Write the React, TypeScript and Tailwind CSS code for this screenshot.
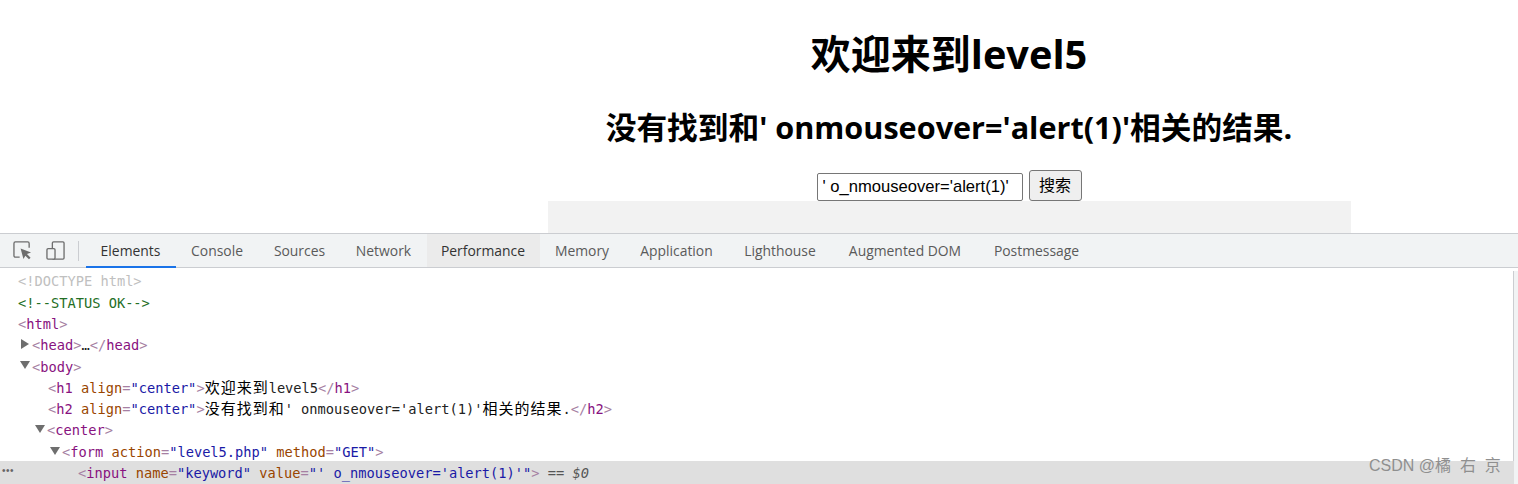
import React from "react";

const mono = "font-['DejaVu_Sans_Mono','Noto_Sans_CJK_SC',monospace]";

const tabs = [
  { name: "Elements", w: "w-[90px]", active: true },
  { name: "Console", w: "w-[83px]" },
  { name: "Sources", w: "w-[82px]" },
  { name: "Network", w: "w-[86px]" },
  { name: "Performance", w: "w-[113px]", hover: true },
  { name: "Memory", w: "w-[85px]" },
  { name: "Application", w: "w-[104px]" },
  { name: "Lighthouse", w: "w-[103px]" },
  { name: "Augmented DOM", w: "w-[147px]" },
  { name: "Postmessage", w: "w-[116px]" },
];

const Tag = ({ children }: { children: React.ReactNode }) => (
  <span className="text-[#881280]">{children}</span>
);
const Gray = ({ children }: { children: React.ReactNode }) => (
  <span className="text-[#a67fa3]">{children}</span>
);
const Attr = ({ children }: { children: React.ReactNode }) => (
  <span className="text-[#994500]">{children}</span>
);
const Val = ({ children }: { children: React.ReactNode }) => (
  <span className="text-[#1a1aa6]">{children}</span>
);
const Cjk = ({ children }: { children: React.ReactNode }) => (
  <span className="text-[15px] tracking-[1px] text-black">{children}</span>
);

const Arrow = ({ open }: { open?: boolean }) =>
  open ? (
    <span className="w-0 h-0 border-x-[5px] border-x-transparent border-t-[8px] border-t-[#6e6e6e] mr-[2px] -mt-[3px]" />
  ) : (
    <span className="w-0 h-0 border-y-[5px] border-y-transparent border-l-[8px] border-l-[#6e6e6e] mr-[3px] -mt-[3px]" />
  );

const Row = ({ pad, arrow, children }: { pad: string; arrow?: "open" | "closed"; children: React.ReactNode }) => (
  <div className={`h-[21.3px] flex items-center whitespace-pre ${pad}`}>
    {arrow && <Arrow open={arrow === "open"} />}
    <span>{children}</span>
  </div>
);

export default function App() {
  return (
    <div className="w-[1518px] h-[484px] overflow-hidden bg-white flex flex-col font-['Liberation_Sans','Noto_Sans_CJK_SC',sans-serif] relative">
      {/* page */}
      <div className="h-[233px] flex flex-col items-center shrink-0 text-black">
        <h1 className="mt-[28px] ml-[380px] h-[52px] leading-[52px] font-bold whitespace-pre">
          <span className="text-[40px]">欢迎来到</span>
          <span className="text-[39.7px] font-['Open_Sans',sans-serif]">level5</span>
        </h1>
        <h2 className="mt-[27px] ml-[380px] h-[40px] leading-[40px] font-bold whitespace-pre">
          <span className="text-[30.7px]">没有找到和</span>
          <span className="text-[30.6px] font-['Open_Sans',sans-serif]">' onmouseover='alert(1)'</span>
          <span className="text-[30.7px]">相关的结果</span>
          <span className="text-[30.6px] font-['Open_Sans',sans-serif]">.</span>
        </h2>
        <div className="mt-[23px] ml-[380px] flex items-end gap-[6px]">
          <input
            readOnly
            value="' o_nmouseover='alert(1)'"
            className="w-[206px] h-[28px] border border-[#767676] rounded-[2px] px-[5px] text-[16.6px] text-black bg-white"
          />
          <button className="w-[53px] h-[31px] border border-[#767676] rounded-[3px] bg-[#efefef] text-[16px] text-black">
            搜索
          </button>
        </div>
        <div className="w-[803px] ml-[380px] h-[32px] bg-[#f2f2f2] shrink-0" />
      </div>

      {/* devtools tab bar */}
      <div className="h-[35px] shrink-0 bg-[#f1f3f4] border-y border-[#cbcdd1] flex items-stretch">
        <div className="w-[86px] flex items-center shrink-0 pl-[13px]">
          <svg width="19" height="19" viewBox="0 0 20 20" fill="none" className="text-[#6e6e6e]">
            <path d="M7 17H2.500A1.500 1.500 0 0 1 1 15.500V2.500A1.500 1.500 0 0 1 2.500 1H15.500A1.500 1.500 0 0 1 17 2.500V7" stroke="currentColor" strokeWidth="1.400" />
            <path d="M8 8l11 4.200-4.300 1.600 3.800 3.700-1.700 1.700-3.800-3.800L11 19z" fill="currentColor" />
          </svg>
          <svg width="19" height="19" viewBox="0 0 20 20" fill="none" className="ml-[14px] text-[#6e6e6e]">
            <rect x="6.700" y="1" width="12.300" height="18" rx="1.200" stroke="currentColor" strokeWidth="1.400" />
            <rect x="1" y="8" width="8.500" height="11" rx="1.200" fill="#f1f3f4" stroke="currentColor" strokeWidth="1.400" />
          </svg>
          <div className="ml-[13px] w-px h-[20px] bg-[#cbcdd1]" />
        </div>
        {tabs.map((t) => (
          <div
            key={t.name}
            className={`${t.w} shrink-0 flex items-center justify-center pt-[1px] pr-[1px] text-[13.9px] font-['Open_Sans',sans-serif] relative ${
              t.active || t.hover ? "text-[#333]" : "text-[#5a5a5a]"
            } ${t.hover ? "bg-[#ebebeb]" : ""}`}
          >
            {t.name}
            {t.active && <span className="absolute left-0 right-0 -bottom-px h-[2px] bg-[#1a73e8]" />}
          </div>
        ))}
      </div>

      {/* elements tree */}
      <div className={`flex-1 pt-[3px] text-[13.7px] ${mono} text-[#222] flex`}>
        <div className="w-[1514px] shrink-0 border-r border-[#cbcdd1]">
          <Row pad="pl-[18px]"><span className="text-[#c0c0c0]">{"<!DOCTYPE html>"}</span></Row>
          <Row pad="pl-[18px]"><span className="text-[#236e25]">{"<!--STATUS OK-->"}</span></Row>
          <Row pad="pl-[18px]"><Gray>{"<"}</Gray><Tag>html</Tag><Gray>{">"}</Gray></Row>
          <Row pad="pl-[21px]" arrow="closed"><Gray>{"<"}</Gray><Tag>head</Tag><Gray>{">"}</Gray>…<Gray>{"</"}</Gray><Tag>head</Tag><Gray>{">"}</Gray></Row>
          <Row pad="pl-[20px]" arrow="open"><Gray>{"<"}</Gray><Tag>body</Tag><Gray>{">"}</Gray></Row>
          <Row pad="pl-[48px]"><Gray>{"<"}</Gray><Tag>h1</Tag> <Attr>align</Attr><Gray>=</Gray><Val>"center"</Val><Gray>{">"}</Gray><Cjk>欢迎来到</Cjk>level5<Gray>{"</"}</Gray><Tag>h1</Tag><Gray>{">"}</Gray></Row>
          <Row pad="pl-[48px]"><Gray>{"<"}</Gray><Tag>h2</Tag> <Attr>align</Attr><Gray>=</Gray><Val>"center"</Val><Gray>{">"}</Gray><Cjk>没有找到和</Cjk>' onmouseover='alert(1)'<Cjk>相关的结果</Cjk>.<Gray>{"</"}</Gray><Tag>h2</Tag><Gray>{">"}</Gray></Row>
          <Row pad="pl-[35px]" arrow="open"><Gray>{"<"}</Gray><Tag>center</Tag><Gray>{">"}</Gray></Row>
          <Row pad="pl-[50px]" arrow="open"><Gray>{"<"}</Gray><Tag>form</Tag> <Attr>action</Attr><Gray>=</Gray><Val>"level5.php"</Val> <Attr>method</Attr><Gray>=</Gray><Val>"GET"</Val><Gray>{">"}</Gray></Row>
        </div>
        <div className="flex-1 bg-[#f1f3f4]" />
      </div>

      {/* selected line sits over the tree's bottom edge */}
      <div className={`absolute left-0 w-[1514px] top-[461px] h-[23px] pt-[1px] bg-[#dfdfdf] flex items-center text-[13.7px] ${mono} whitespace-pre`}>
        <span className="absolute left-[2px] top-[2px] text-[#666] text-[10px] leading-[16px] tracking-[0.5px] font-['Liberation_Sans',sans-serif]">•••</span>
        <span className="pl-[78px]">
          <Gray>{"<"}</Gray><Tag>input</Tag> <Attr>name</Attr><Gray>=</Gray><Val>"keyword"</Val> <Attr>value</Attr><Gray>=</Gray><Val>"' o_nmouseover='alert(1)'"</Val><Gray>{">"}</Gray>
          <span className="text-[#555]"> == <i>$0</i></span>
        </span>
      </div>

      {/* watermark */}
      <div className="absolute left-[1369px] top-[456px] text-[16px] leading-[20px] text-[#8f8f8f] whitespace-pre">CSDN @橘  右  京</div>
    </div>
  );
}
